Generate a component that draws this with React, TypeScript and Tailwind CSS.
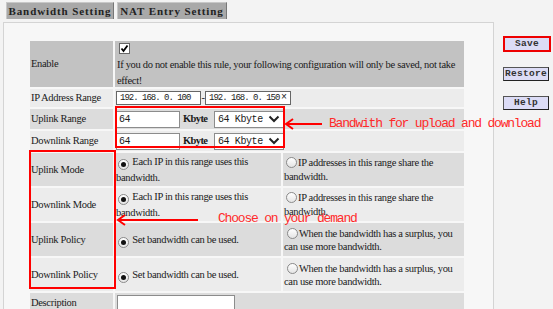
import React from "react";

const serif = "font-['Liberation_Serif','Times_New_Roman',serif]";
const mono = "font-['Liberation_Mono','Courier_New',monospace]";

function Radio({ on }: { on?: boolean }) {
  return (
    <span className="inline-flex w-[11px] h-[11px] rounded-full border border-[#8a8a8a] bg-[linear-gradient(#ffffff,#e4e4e4)] items-center justify-center align-[-2px] mr-[1px]">
      {on ? <span className="w-[5px] h-[5px] rounded-full bg-[#111]" /> : null}
    </span>
  );
}

function Chevron() {
  return (
    <svg width="12" height="8" viewBox="0 0 12 8" className="shrink-0">
      <polyline points="1.5,1.5 6,6 10.5,1.5" fill="none" stroke="#222" strokeWidth="2" />
    </svg>
  );
}

function RangeRow({ label, bg }: { label: string; bg: string }) {
  return (
    <div className="flex gap-[2px] h-[20px]">
      <div className={`w-[83px] ${bg} flex items-center pl-[1px]`}>{label}</div>
      <div className={`w-[349px] ${bg} flex items-center pl-[1px] gap-[3px]`}>
        <div className={`w-[64px] h-[17px] bg-white border border-[#8c8c8c] ${mono} text-[10px] leading-[15px] pl-[2px] tracking-[-0.5px]`}>64</div>
        <span className="font-bold text-[10.5px] tracking-[-0.6px] w-[28px]">Kbyte</span>
        <div className={`w-[70px] h-[17px] bg-white border border-[#8c8c8c] ${mono} text-[10px] flex items-center justify-between px-[3px] whitespace-nowrap`}>
          <span className="tracking-[-0.4px]">64 Kbyte</span>
          <Chevron />
        </div>
      </div>
    </div>
  );
}

function ModeRow({ label, bg }: { label: string; bg: string }) {
  return (
    <div className="flex gap-[2px] h-[33px]">
      <div className={`w-[83px] ${bg} flex items-center pl-[1px]`}>{label}</div>
      <div className={`w-[166px] ${bg} flex flex-col justify-center pl-[1px] leading-[15px]`}>
        <div className="pl-[2px] whitespace-nowrap"><Radio on /> Each IP in this range uses this</div>
        <div>bandwidth.</div>
      </div>
      <div className={`w-[181px] ${bg} flex flex-col justify-center pl-[1px] leading-[14px]`}>
        <div className="pl-[2px] whitespace-nowrap"><Radio />IP addresses in this range share the</div>
        <div>bandwidth.</div>
      </div>
    </div>
  );
}

function PolicyRow({ label, bg }: { label: string; bg: string }) {
  return (
    <div className="flex gap-[2px] h-[33px]">
      <div className={`w-[83px] ${bg} flex items-center pl-[1px]`}>{label}</div>
      <div className={`w-[166px] ${bg} flex items-center pl-[3px]`}>
        <span className="whitespace-nowrap"><Radio on /> Set bandwidth can be used.</span>
      </div>
      <div className={`w-[181px] ${bg} flex flex-col justify-center pl-[1px] leading-[13px]`}>
        <div className="pl-[3px] whitespace-nowrap"><Radio />When the bandwidth has a surplus, you</div>
        <div>can use more bandwidth.</div>
      </div>
    </div>
  );
}

function SideBtn({ label, save }: { label: string; save?: boolean }) {
  return (
    <div
      className={`${save ? "w-[48px] h-[16px] border-2 border-[#ee0000]" : "w-[46px] h-[14px] border border-[#555] border-b-[#222] border-r-[#222]"} bg-[#dcdcf6] flex items-center justify-center ${mono} text-[9.5px] font-bold text-[#333] tracking-[0.3px]`}
    >
      {label}
    </div>
  );
}

export default function App() {
  return (
    <div className={`relative w-[553px] h-[309px] overflow-hidden bg-[#f3f3f3] text-[#1a1a1a] ${serif} text-[10.5px] tracking-[-0.32px]`}>
      {/* tabs */}
      <div className="flex gap-[3px] pl-[6px] pt-[2px] h-[20px]">
        <div className="w-[108px] h-[17px] bg-[#a9a9a9] border-r border-[#777] border-t border-l border-t-[#c8c8c8] border-l-[#c8c8c8] flex items-center justify-center font-bold text-[11px] tracking-[0.9px] text-[#222]">
          Bandwidth Setting
        </div>
        <div className="w-[110px] h-[17px] bg-[#a9a9a9] border-r border-[#777] border-t border-l border-t-[#c8c8c8] border-l-[#c8c8c8] flex items-center justify-center font-bold text-[11px] tracking-[0.9px] text-[#222]">
          NAT Entry Setting
        </div>
      </div>

      <div className="flex mt-[2px]">
        {/* main panel */}
        <div className="ml-[3px] w-[491px] h-[300px] border-t border-l border-r border-[#d4d4d4] bg-[#f7f7f7] pl-[26px] pt-[18px]">
          <div className="flex flex-col gap-[2px]">
            {/* Enable */}
            <div className="flex gap-[2px] h-[46px]">
              <div className="w-[83px] bg-[#c2c2c2] flex items-center pl-[1px]">Enable</div>
              <div className="w-[349px] bg-[#c2c2c2] pl-[2px] pt-[2px] leading-[16px]">
                <div className="w-[11px] h-[11px] bg-white border border-[#666] ml-[2px] mb-[3px] flex items-center justify-center">
                  <svg width="9" height="9" viewBox="0 0 9 9">
                    <polyline points="1.5,4.5 3.5,7 7.5,1.5" fill="none" stroke="#000" strokeWidth="1.8" />
                  </svg>
                </div>
                <div className="whitespace-nowrap">If you do not enable this rule, your following configuration will only be saved, not take</div>
                <div>effect!</div>
              </div>
            </div>
            {/* IP */}
            <div className="flex gap-[2px] h-[18px]">
              <div className="w-[83px] bg-[#ececec] flex items-center pl-[1px] whitespace-nowrap">IP Address Range</div>
              <div className="w-[349px] bg-[#ececec] flex items-center pl-[1px]">
                <div className={`w-[85px] h-[14px] bg-white border border-[#666] ${mono} text-[9px] leading-[12px] pl-[3px] tracking-[-1px] whitespace-nowrap overflow-hidden`}>192. 168. 0. 100</div>
                <span className="w-[4px] text-center leading-[10px]">-</span>
                <div className={`w-[86px] h-[14px] bg-white border border-[#666] ${mono} text-[9px] leading-[12px] pl-[3px] tracking-[-1px] flex justify-between pr-[3px] whitespace-nowrap overflow-hidden`}>
                  <span>192. 168. 0. 150</span>
                  <span className="tracking-[0px] text-[10px]">×</span>
                </div>
              </div>
            </div>
            <RangeRow label="Uplink Range" bg="bg-[#dcdcdc]" />
            <RangeRow label="Downlink Range" bg="bg-[#ececec]" />
            <ModeRow label="Uplink Mode" bg="bg-[#dcdcdc]" />
            <ModeRow label="Downlink Mode" bg="bg-[#ececec]" />
            <PolicyRow label="Uplink Policy" bg="bg-[#dcdcdc]" />
            <PolicyRow label="Downlink Policy" bg="bg-[#ececec]" />
            <div className="flex gap-[2px] h-[20px]">
              <div className="w-[83px] bg-[#dcdcdc] flex items-center pl-[1px]">Description</div>
              <div className="w-[349px] bg-[#dcdcdc] flex items-start pl-[2px] pt-[2px]">
                <div className="w-[118px] h-[17px] bg-white border border-[#8c8c8c]" />
              </div>
            </div>
          </div>
        </div>
        {/* sidebar */}
        <div className="flex flex-col items-start pl-[9px] pt-[14px]">
          <SideBtn label="Save" save />
          <div className="h-[15px]" />
          <SideBtn label="Restore" />
          <div className="h-[15px]" />
          <SideBtn label="Help" />
        </div>
      </div>

      {/* annotations */}
      <div className="absolute left-[115px] top-[106px] w-[170px] h-[42px] border-2 border-[#f00]" />
      <div className="absolute left-[29px] top-[150px] w-[87px] h-[139px] border-2 border-[#f00]" />
      <svg className="absolute left-0 top-0" width="553" height="309">
        <line x1="286" y1="124" x2="322" y2="124" stroke="#f00" strokeWidth="2" />
        <polyline points="293,119 286,124 293,129" fill="none" stroke="#f00" strokeWidth="2" />
        <line x1="118" y1="220" x2="198" y2="220" stroke="#f00" strokeWidth="2" />
        <polyline points="125,215 118,220 125,225" fill="none" stroke="#f00" strokeWidth="2" />
      </svg>
      <div className={`absolute left-[329px] top-[116px] ${mono} text-[13px] leading-[16px] tracking-[-1.2px] text-[#ff2a2a] whitespace-pre`}>
        Bandwith for upload and download
      </div>
      <div className={`absolute left-[218px] top-[211px] ${mono} text-[13px] leading-[16px] tracking-[-1.2px] text-[#ff2a2a] whitespace-pre`}>
        Choose on your demand
      </div>
    </div>
  );
}
